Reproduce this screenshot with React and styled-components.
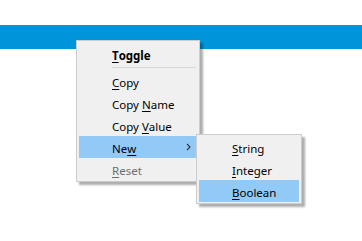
import React from 'react';
import styled, { createGlobalStyle } from 'styled-components';

const GlobalStyle = createGlobalStyle`
  html, body {
    margin: 0;
    padding: 0;
    background: #ffffff;
  }
  body {
    font-family: "Noto Sans", "Open Sans", sans-serif;
    font-size: 11.5px;
  }
`;

const Page = styled.div`
  position: relative;
  width: 362px;
  height: 241px;
  padding-top: 25px;
  box-sizing: border-box;
`;

const TitleBar = styled.div`
  height: 24px;
  background: #0095db;
`;

// контекстное меню
const Menu = styled.div`
  position: absolute;
  left: ${(p) => p.$left}px;
  top: ${(p) => p.$top}px;
  width: ${(p) => p.$width}px;
  box-sizing: border-box;
  padding: ${(p) => p.$pad}px 2px 1px;
  background: #f0f0f0;
  border: 1px solid #cccccc;
  box-shadow: 3px 3px 2px rgba(0, 0, 0, 0.32);
  display: flex;
  flex-direction: column;
  z-index: ${(p) => p.$z || 1};
`;

const Item = styled.div`
  position: relative;
  height: 22px;
  box-sizing: border-box;
  display: flex;
  align-items: center;
  padding: 3px 0 0 33px;
  color: ${(p) => (p.$disabled ? '#6d6d6d' : '#000000')};
  background: ${(p) => (p.$active ? '#91c9f7' : 'transparent')};
  font-weight: ${(p) => (p.$bold ? 700 : 400)};
  white-space: nowrap;
  line-height: 1;
`;

const Key = styled.span`
  text-decoration: underline;
  text-underline-offset: 2px;
`;

const Separator = styled.div`
  height: 1px;
  margin: 2px 1px 2px 33px;
  background: #d7d7d7;
`;

const Arrow = styled.svg`
  position: absolute;
  right: 6px;
  top: 7px;
`;

const SubMenuSlot = styled.div`
  position: absolute;
  left: 117px;
  top: -2px;
`;

const App = () => (
  <>
    <GlobalStyle />
    <Page>
      <TitleBar />
      <Menu $left={76} $top={40} $width={124} $pad={2}>
        <Item $bold>
          <Key>T</Key>oggle
        </Item>
        <Separator />
        <Item>
          <Key>C</Key>opy
        </Item>
        <Item>
          Copy&nbsp;<Key>N</Key>ame
        </Item>
        <Item>
          Copy&nbsp;<Key>V</Key>alue
        </Item>
        <Item $active>
          Ne<Key>w</Key>
          <Arrow width="5" height="8" viewBox="0 0 5 8">
            <path d="M1 1 L4 4 L1 7" fill="none" stroke="#333" strokeWidth="1.1" />
          </Arrow>
          <SubMenuSlot>
            <Menu $left={0} $top={0} $width={106} $pad={1} $z={2}>
              <Item>
                <Key>S</Key>tring
              </Item>
              <Item>
                <Key>I</Key>nteger
              </Item>
              <Item $active>
                <Key>B</Key>oolean
              </Item>
            </Menu>
          </SubMenuSlot>
        </Item>
        <Item $disabled>
          <Key>R</Key>eset
        </Item>
      </Menu>
    </Page>
  </>
);

export default App;
